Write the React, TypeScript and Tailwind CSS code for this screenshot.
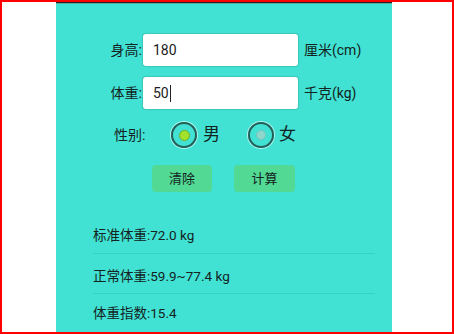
const font = { fontFamily: '"Roboto", "Noto Sans CJK SC", sans-serif' };

function Field({ label, value, unit, cursor }: { label: string; value: string; unit: string; cursor?: boolean }) {
  return (
    <div className="flex items-center h-[32px]">
      <div className="w-[87px] text-right text-[14px] text-[#142322] pr-[1px]">{label}</div>
      <div className="w-[155px] h-[32px] rounded-[3px] bg-white shadow-[0_0_1px_1px_rgba(0,0,0,0.12)] flex items-center pl-[10px] text-[14px] text-[#1b1b1b]">
        <span>{value}</span>
        {cursor && <span className="ml-[1px] w-px h-[17px] bg-[#222]" />}
      </div>
      <div className="ml-[6px] text-[14px] text-[#142322]">{unit}</div>
    </div>
  );
}

function Radio({ checked }: { checked?: boolean }) {
  return (
    <div className="w-[26px] h-[26px] rounded-full border-2 border-[#245f5a] shadow-[0_0_0_1px_rgba(255,255,255,0.6)] flex items-center justify-center">
      {checked ? (
        <div className="w-[11px] h-[11px] rounded-full bg-[#a3e22c] border border-[#6fae2a]" />
      ) : (
        <div className="w-[10px] h-[10px] rounded-full bg-[#8fd6cd] border border-[#7cc4bb]" />
      )}
    </div>
  );
}

export default function App() {
  return (
    <div className="w-[454px] h-[334px] border-2 border-[#ff0000] bg-white flex overflow-hidden" style={font}>
      <div className="w-[54px] shrink-0" />
      <div className="w-[336px] shrink-0 bg-[#41e2d3] flex flex-col">
        <div className="h-px bg-[#1e2524]" />
        <div className="h-px bg-[#5aa9a2]" />
        <div className="mt-[30px]">
          <Field label="身高:" value="180" unit="厘米(cm)" />
        </div>
        <div className="mt-[11px]">
          <Field label="体重:" value="50" unit="千克(kg)" cursor />
        </div>
        <div className="mt-[13px] flex items-center h-[26px] text-[#142322]">
          <div className="w-[58px] shrink-0" />
          <div className="w-[57px] text-[14px]">性别:</div>
          <Radio checked />
          <span className="ml-[6px] text-[17px]">男</span>
          <div className="ml-[28px]">
            <Radio />
          </div>
          <span className="ml-[5px] text-[17px]">女</span>
        </div>
        <div className="mt-[17px] flex h-[27px] pl-[96px] gap-[22px]">
          <div className="w-[60px] rounded-[4px] bg-[#52d993] flex items-center justify-center text-[13px] text-[#142322]">清除</div>
          <div className="w-[61px] rounded-[4px] bg-[#52d993] flex items-center justify-center text-[13px] text-[#142322]">计算</div>
        </div>
        <div className="pl-[37px] pr-[17px] text-[13.5px] text-[#142322]">
          <div className="mt-[33px] h-[20px] leading-[20px]">标准体重:72.0 kg</div>
          <div className="mt-[8px] h-px bg-[#3ad0c1]" />
          <div className="mt-[12px] h-[20px] leading-[20px]">正常体重:59.9~77.4 kg</div>
          <div className="mt-[7px] h-px bg-[#3ad0c1]" />
          <div className="mt-[9px] h-[20px] leading-[20px]">体重指数:15.4</div>
        </div>
      </div>
      <div className="flex-1" />
    </div>
  );
}
